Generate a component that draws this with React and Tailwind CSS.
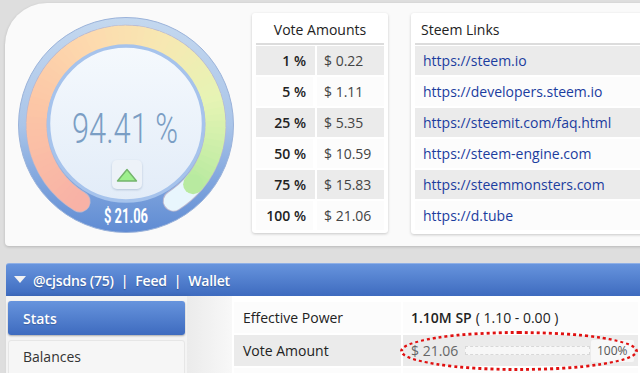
import React from "react";

const CX = 108, CY = 108;
function pt(r, deg) {
  const a = (deg * Math.PI) / 180;
  return [CX + r * Math.cos(a), CY + r * Math.sin(a)];
}
function arcPath(r, a1, a2) {
  const [x1, y1] = pt(r, a1);
  const [x2, y2] = pt(r, a2);
  const large = a2 - a1 > 180 ? 1 : 0;
  return `M ${x1.toFixed(2)} ${y1.toFixed(2)} A ${r} ${r} 0 ${large} 1 ${x2.toFixed(2)} ${y2.toFixed(2)}`;
}
const stops = [
  [0, [248, 178, 166]],
  [0.25, [252, 198, 166]],
  [0.45, [253, 218, 174]],
  [0.62, [247, 232, 178]],
  [0.8, [230, 244, 180]],
  [1, [184, 234, 160]],
];
function colorAt(t) {
  for (let i = 0; i < stops.length - 1; i++) {
    const [t0, c0] = stops[i];
    const [t1, c1] = stops[i + 1];
    if (t >= t0 && t <= t1) {
      const k = (t - t0) / (t1 - t0);
      const c = c0.map((v, j) => Math.round(v + (c1[j] - v) * k));
      return `rgb(${c[0]},${c[1]},${c[2]})`;
    }
  }
  const c = stops[stops.length - 1][1];
  return `rgb(${c[0]},${c[1]},${c[2]})`;
}

function Gauge() {
  const R = 89.5;
  const start = 121, end = 418;
  const vEnd = start + 0.9441 * (end - start);
  const N = 70;
  const segs = [];
  for (let i = 0; i < N; i++) {
    const a1 = start + ((vEnd - start) * i) / N;
    const a2 = start + ((vEnd - start) * (i + 1)) / N + 0.6;
    segs.push(
      <path key={i} d={arcPath(R, a1, Math.min(a2, vEnd))} stroke={colorAt(i / (N - 1))} strokeWidth="20" fill="none" />
    );
  }
  const [sx, sy] = pt(R, start);
  const [ex, ey] = pt(R, vEnd);
  return (
    <svg width="216" height="216" viewBox="0 0 216 216">
      <defs>
        <linearGradient id="outer" x1="0" y1="0" x2="0" y2="1">
          <stop offset="0" stopColor="#c4d8ef" />
          <stop offset="0.5" stopColor="#aac5e9" />
          <stop offset="0.75" stopColor="#82a7de" />
          <stop offset="1" stopColor="#5f8bd3" />
        </linearGradient>
        <linearGradient id="inner" x1="0" y1="0" x2="0" y2="1">
          <stop offset="0" stopColor="#f5f9fd" />
          <stop offset="1" stopColor="#e2ecf8" />
        </linearGradient>
        <filter id="sh" x="-30%" y="-30%" width="160%" height="160%">
          <feDropShadow dx="0" dy="1" stdDeviation="1.2" floodColor="#7d93b0" floodOpacity="0.45" />
        </filter>
      </defs>
      <circle cx={CX} cy={CY} r="107.5" fill="url(#outer)" stroke="#9bb3da" strokeWidth="1" />
      <path d={arcPath(R, start, end)} stroke="#b9b7cf" strokeWidth="21.5" fill="none" strokeLinecap="round" />
      <path d={arcPath(R, vEnd - 2, end)} stroke="#e8f6fd" strokeWidth="19.5" fill="none" strokeLinecap="round" />
      <circle cx={sx} cy={sy} r="10" fill={colorAt(0)} />
      {segs}
      <circle cx={ex} cy={ey} r="10" fill={colorAt(1)} />
      <circle cx={CX} cy="106.5" r="77.5" fill="url(#inner)" stroke="#a6c3ec" strokeWidth="3.5" />
      <text
        x="54"
        y="126"
        textLength="106"
        lengthAdjust="spacingAndGlyphs"
        fontFamily="Roboto, sans-serif"
        fontWeight="300"
        fontSize="42"
        fill="#7b9ec4"
      >
        94.41 %
      </text>
      <rect x="94" y="143" width="30" height="29" rx="5" fill="#edf2f8" filter="url(#sh)" />
      <path d="M99.5 164 L118.5 164 L109 152.5 Z" fill="#9ef08e" stroke="#74b46c" strokeWidth="1.4" strokeLinejoin="round" />
      <text
        x="86"
        y="206"
        textLength="44"
        lengthAdjust="spacingAndGlyphs"
        fontFamily="Roboto, sans-serif"
        fontWeight="700"
        fontSize="21"
        fill="#ffffff"
      >
        $ 21.06
      </text>
    </svg>
  );
}

const votes = [
  ["1 %", "$ 0.22"],
  ["5 %", "$ 1.11"],
  ["25 %", "$ 5.35"],
  ["50 %", "$ 10.59"],
  ["75 %", "$ 15.83"],
  ["100 %", "$ 21.06"],
];
const links = [
  "https://steem.io",
  "https://developers.steem.io",
  "https://steemit.com/faq.html",
  "https://steem-engine.com",
  "https://steemmonsters.com",
  "https://d.tube",
];

export default function App() {
  return (
    <div
      className="w-[640px] h-[373px] overflow-hidden bg-[#dedede] text-[#333]"
      style={{ fontFamily: '"Open Sans", sans-serif' }}
    >
      {/* top panel */}
      <div className="ml-[5px] mt-[3px] h-[243px] w-[700px] rounded-tl-[42px] rounded-bl-[4px] bg-[#fafafa] shadow-[0_1px_3px_rgba(0,0,0,0.18)] flex">
        <div className="w-[247px] pl-[13px] pt-[14px] shrink-0">
          <Gauge />
        </div>
        <div className="mt-[10px] w-[136px] h-[220px] shrink-0 bg-white rounded-[3px] shadow-[0_1px_3px_rgba(0,0,0,0.2)] px-[4px] pt-[2px]">
          <div className="h-[30px] flex items-center justify-center text-[14px] text-[#222] border-b-2 border-[#dcdcdc]">
            Vote Amounts
          </div>
          <div className="flex flex-col gap-[2px] mt-[1px]">
            {votes.map(([p, v], i) => (
              <div key={p} className={`flex h-[29px] shrink-0 gap-[2px] ${i % 2 === 0 ? "bg-[#ebebeb]" : "bg-white"}`}>
                <div className={`w-[57px] flex items-center justify-end pr-[7px] text-[14px] font-semibold text-[#222] ${i % 2 === 0 ? "bg-[#ebebeb]" : "bg-[#fcfcfc]"}`}>
                  {p}
                </div>
                <div className={`flex-1 flex items-center pl-[7px] text-[14px] text-[#444] ${i % 2 === 0 ? "bg-[#ebebeb]" : "bg-[#fcfcfc]"} border-l-2 border-white`}>
                  {v}
                </div>
              </div>
            ))}
          </div>
        </div>
        <div className="ml-[23px] mt-[10px] w-[260px] h-[221px] shrink-0 bg-white rounded-[3px] shadow-[0_1px_3px_rgba(0,0,0,0.2)] px-[4px] pt-[2px]">
          <div className="h-[30px] flex items-center pl-[6px] text-[14px] text-[#222] border-b-2 border-[#dcdcdc]">
            Steem Links
          </div>
          <div className="flex flex-col gap-[2px] mt-[1px]">
            {links.map((l, i) => (
              <div key={l} className={`h-[29px] shrink-0 flex items-center pl-[8px] text-[14px] text-[#1b3d9f] ${i % 2 === 0 ? "bg-[#ebebeb]" : "bg-[#fcfcfc]"}`}>
                {l}
              </div>
            ))}
          </div>
        </div>
      </div>

      {/* blue bar */}
      <div className="ml-[6px] mt-[17px] h-[33px] w-[700px] rounded-t-[3px] bg-gradient-to-b from-[#6794dd] to-[#3e6bbf] border-t border-[#8fb0e6] flex items-center pl-[8px] text-white text-[14px] font-semibold tracking-[-0.2px] [text-shadow:0_1px_1px_rgba(0,0,0,0.25)]">
        <svg width="12" height="8" viewBox="0 0 12 8" className="mr-[7px]">
          <path d="M0 0 L12 0 L6 7 Z" fill="#f2f2f2" />
        </svg>
        <span>@cjsdns (75)</span>
        <span className="mx-[7px]">|</span>
        <span>Feed</span>
        <span className="mx-[7px]">|</span>
        <span>Wallet</span>
      </div>

      {/* lower */}
      <div className="flex h-[120px]">
        <div className="ml-[6px] w-[181px] shrink-0 bg-[#f4f4f4] shadow-[2px_0_4px_rgba(0,0,0,0.12)] px-[2px] pt-[5px] flex flex-col gap-[5px]">
          <div className="h-[34px] shrink-0 rounded-[3px] bg-gradient-to-b from-[#6794dd] to-[#3e6bbf] shadow-[0_1px_2px_rgba(0,0,0,0.3)] flex items-center pl-[15px] text-white text-[14px] font-semibold [text-shadow:0_1px_1px_rgba(0,0,0,0.2)]">
            Stats
          </div>
          <div className="h-[40px] shrink-0 rounded-[3px] bg-[#f6f6f6] border border-[#e6e6e6] flex items-start pt-[5px] pl-[14px] text-[14px] text-[#333]">
            Balances
          </div>
        </div>
        <div className="w-[45px] shrink-0 bg-gradient-to-r from-[#ebebeb] to-[#f8f8f8]" />
        <div className="flex-1 bg-white px-[2px] pt-[6px] flex flex-col gap-[2px] relative">
          <div className="flex h-[31px] shrink-0 gap-[2px]">
            <div className="w-[167px] flex items-center pl-[9px] text-[14px] text-[#222] bg-[#fcfcfc]">Effective Power</div>
            <div className="flex-1 flex items-center pl-[8px] text-[14px] text-[#222] bg-[#fcfcfc]">
              <span className="font-semibold">1.10M SP</span>
              <span className="ml-[4px]">( 1.10 - 0.00 )</span>
            </div>
          </div>
          <div className="flex h-[31px] shrink-0 gap-[2px]">
            <div className="w-[167px] flex items-center pl-[9px] text-[14px] text-[#222] bg-[#ebebeb]">Vote Amount</div>
            <div className="flex-1 flex items-center pl-[8px] text-[14px] text-[#666] bg-[#ebebeb]">
              <span className="w-[54px] shrink-0">$ 21.06</span>
              <div className="w-[125px] shrink-0 h-[9px] border border-dashed border-[#d8d8d8] bg-[#f7f7f7]" />
              <div className="ml-[1px] h-[22px] px-[6px] flex items-center bg-[#f8f8f8] rounded-[2px] text-[12px] text-[#555]">100%</div>
            </div>
          </div>
          <div className="flex h-[31px] shrink-0 gap-[2px]">
            <div className="w-[167px] bg-[#fcfcfc]" />
            <div className="flex-1 bg-[#fcfcfc]" />
          </div>
          <div className="absolute left-[168px] top-[35px] w-[238px] h-[40px] rounded-[50%] border-[3px] border-dotted border-[#e01010]" />
        </div>
      </div>
    </div>
  );
}
